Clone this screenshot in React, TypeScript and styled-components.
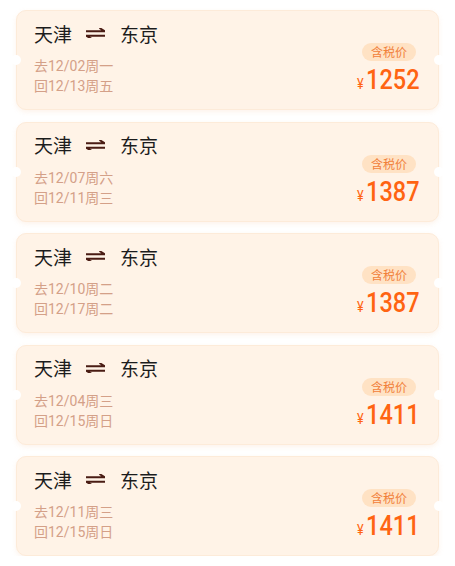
import React from 'react';
import styled, { createGlobalStyle } from 'styled-components';

const GlobalStyle = createGlobalStyle`
  html, body {
    margin: 0;
    padding: 0;
    background: #ffffff;
    font-family: Roboto, "Noto Sans CJK SC", sans-serif;
  }
`;

type Trip = {
  go: string;
  back: string;
  price: number;
};

const trips: Trip[] = [
  { go: '去12/02周一', back: '回12/13周五', price: 1252 },
  { go: '去12/07周六', back: '回12/11周三', price: 1387 },
  { go: '去12/10周二', back: '回12/17周二', price: 1387 },
  { go: '去12/04周三', back: '回12/15周日', price: 1411 },
  { go: '去12/11周三', back: '回12/15周日', price: 1411 }
];

const List = styled.div`
  display: flex;
  flex-direction: column;
  gap: 11.5px;
  padding: 10px 16px 0 16px;
`;

const Card = styled.div`
  position: relative;
  box-sizing: border-box;
  height: 100px;
  display: flex;
  justify-content: space-between;
  align-items: flex-end;
  padding: 10px 18px 13px 17px;
  background: #fff3e7;
  border: 1px solid #fdebd9;
  border-radius: 10px;
  box-shadow: 0 2px 5px rgba(245, 200, 165, 0.22);

  &::before,
  &::after {
    content: '';
    position: absolute;
    top: 50%;
    width: 10px;
    height: 10px;
    margin-top: -5px;
    border-radius: 50%;
    background: #ffffff;
  }
  &::before {
    left: -6px;
  }
  &::after {
    right: -6px;
  }
`;

const Left = styled.div`
  display: flex;
  flex-direction: column;
  align-self: stretch;
`;

const Route = styled.div`
  display: flex;
  align-items: center;
  height: 24px;
  font-size: 19px;
  color: #1c1c1c;
  font-family: "Noto Sans CJK SC", sans-serif;
`;

const Swap = styled.svg`
  margin: 0 15px 0 14px;
`;

const Dates = styled.div`
  margin-top: 11px;
  font-size: 14px;
  line-height: 20px;
  color: #d4a088;
`;

const Right = styled.div`
  display: flex;
  flex-direction: column;
  align-items: flex-end;
`;

const Badge = styled.span`
  height: 18px;
  line-height: 18px;
  padding: 0 9px;
  border-radius: 9px;
  background: #ffe2c4;
  color: #f1803a;
  font-size: 12px;
  font-family: "Noto Sans CJK SC", sans-serif;
  margin-right: 4px;
`;

const Price = styled.div`
  margin-top: 3px;
  height: 32px;
  line-height: 32px;
  color: #ff6412;
  white-space: nowrap;
  transform: scaleX(0.84);
  transform-origin: right center;
`;

const Yen = styled.span`
  font-size: 15px;
  margin-right: 3px;
`;

const Amount = styled.span`
  font-size: 28px;
  font-weight: 500;
`;

const SwapIcon = () => (
  <Swap width="19" height="10" viewBox="0 0 19 10">
    <path d="M0 3.2h18.5L13.5 0" fill="none" stroke="#4a1c14" strokeWidth="2" />
    <path d="M19 7.8H0.5L5.5 10.8" fill="none" stroke="#4a1c14" strokeWidth="2" />
  </Swap>
);

const TripCard: React.FC<{ trip: Trip }> = ({ trip }) => (
  <Card>
    <Left>
      <Route>
        天津
        <SwapIcon />
        东京
      </Route>
      <Dates>
        <div>{trip.go}</div>
        <div>{trip.back}</div>
      </Dates>
    </Left>
    <Right>
      <Badge>含税价</Badge>
      <Price>
        <Yen>¥</Yen>
        <Amount>{trip.price}</Amount>
      </Price>
    </Right>
  </Card>
);

const App: React.FC = () => (
  <>
    <GlobalStyle />
    <List>
      {trips.map((t, i) => (
        <TripCard key={i} trip={t} />
      ))}
    </List>
  </>
);

export default App;
